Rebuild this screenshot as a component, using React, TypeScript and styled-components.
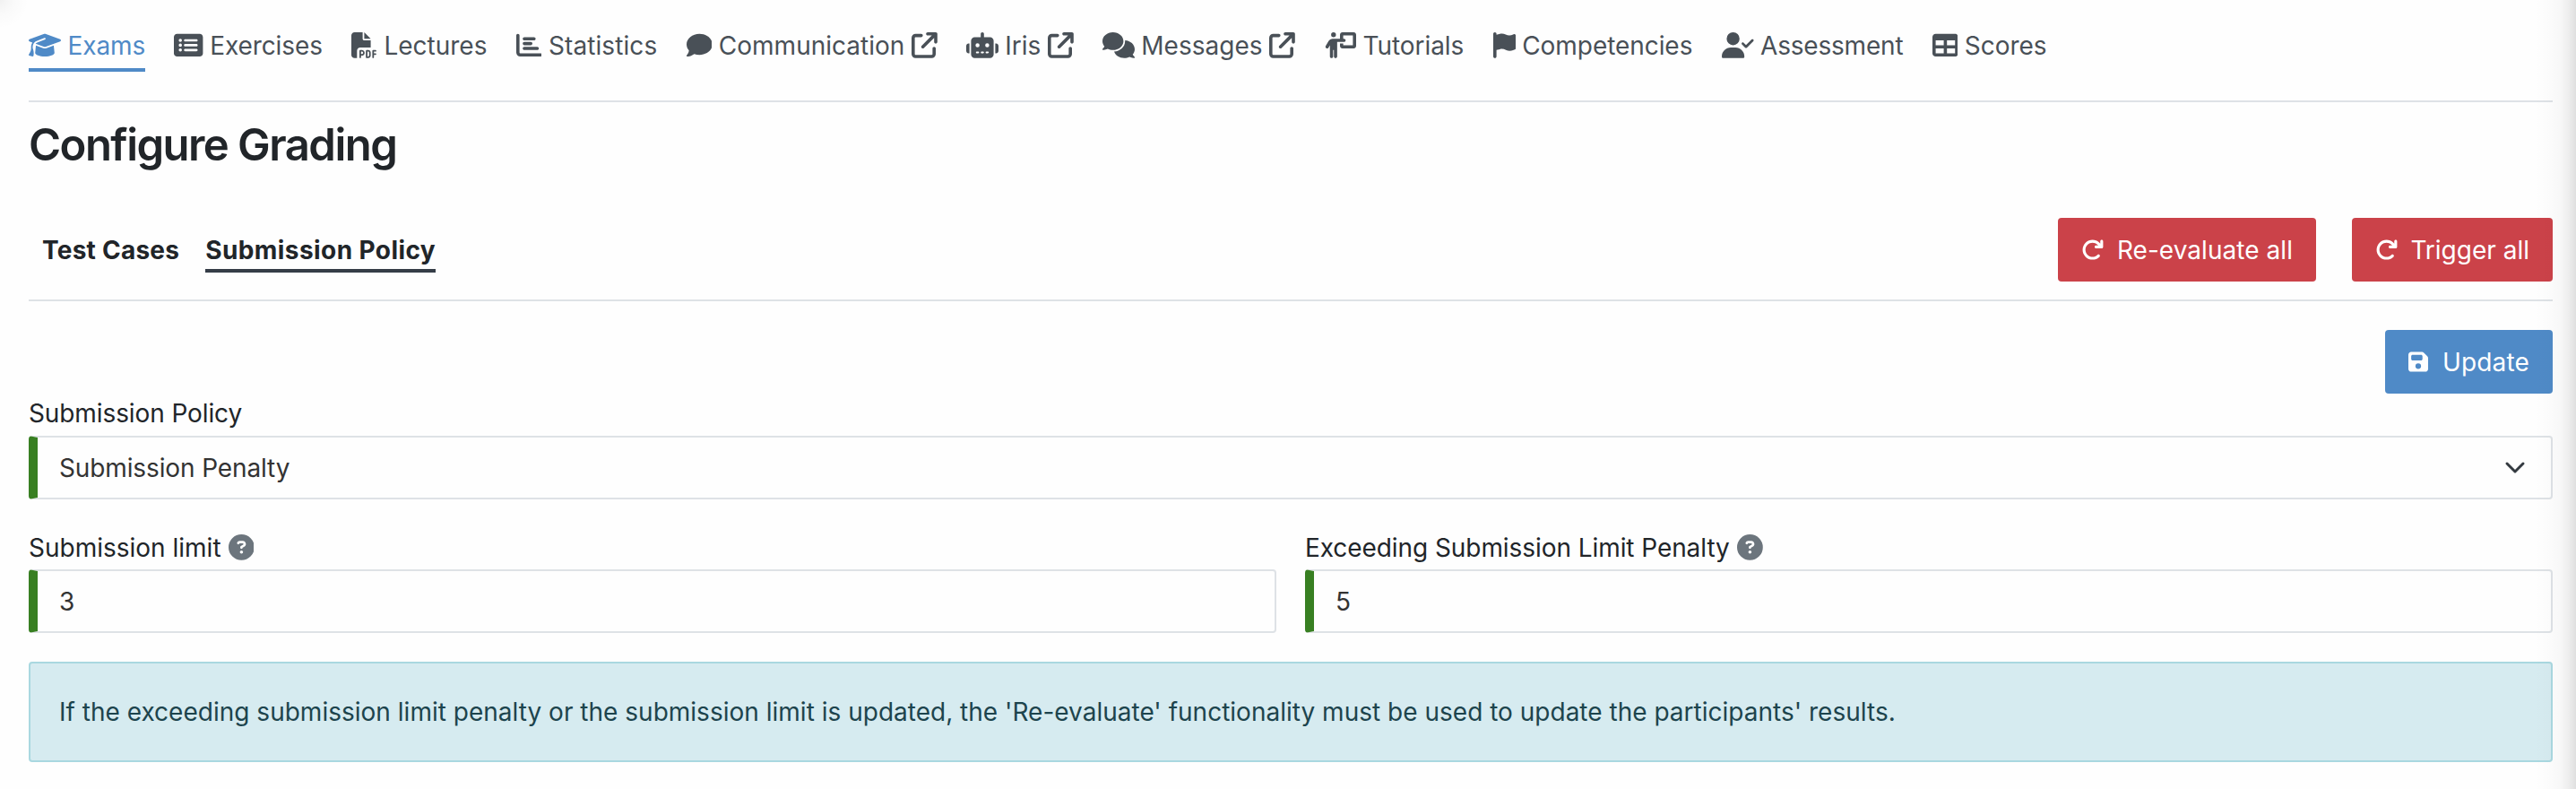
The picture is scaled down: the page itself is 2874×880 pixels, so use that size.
import React from 'react';
import styled, { createGlobalStyle, css } from 'styled-components';
import {
  FaArrowRotateRight,
  FaArrowUpRightFromSquare,
  FaChartBar,
  FaCircleQuestion,
  FaComment,
  FaComments,
  FaFilePdf,
  FaFlag,
  FaFloppyDisk,
  FaGraduationCap,
  FaPersonChalkboard,
  FaRectangleList,
  FaRobot,
  FaTable,
  FaUserCheck,
} from 'react-icons/fa6';
import type { IconType } from 'react-icons';

const GlobalStyle = createGlobalStyle`
  *, *::before, *::after { box-sizing: border-box; }
  body {
    margin: 0;
    background: #fefefe;
    color: #212529;
    font-family: Inter, "Liberation Sans", sans-serif;
    font-size: 28px;
    line-height: 42px;
  }
`;

const Page = styled.div`
  position: relative;
  height: 880px;
  padding: 0 26px 0 32px;
  overflow: hidden;
`;

const EdgeShade = styled.div`
  position: absolute;
  inset: 0;
  pointer-events: none;
  background:
    linear-gradient(to left, rgba(0, 0, 0, 0.12) 0, rgba(0, 0, 0, 0.063) 9px, rgba(0, 0, 0, 0.025) 19px, rgba(0, 0, 0, 0.01) 29px, transparent 46px),
    radial-gradient(circle at 0 0, rgba(0, 0, 0, 0.05) 0, rgba(0, 0, 0, 0.015) 16px, transparent 32px);
`;

const Nav = styled.nav`
  display: flex;
  align-items: flex-start;
  gap: 32.2px;
  height: 114px;
  padding-top: 25px;
  border-bottom: 2px solid #dee2e6;
`;

const NavItem = styled.a<{ $active?: boolean }>`
  display: flex;
  align-items: center;
  gap: 7.5px;
  height: 55px;
  border-bottom: 4px solid ${(p) => (p.$active ? '#4f8ac7' : 'transparent')};
  color: ${(p) => (p.$active ? '#4f8ac7' : '#495057')};
`;

/* Glyphs share one height; the width follows each glyph's own proportions. */
const IconBox = styled.span<{ $width?: number }>`
  display: flex;
  flex: none;
  width: ${(p) => p.$width ?? 28.8}px;
  height: 28.8px;

  svg {
    width: 100%;
    height: 100%;
  }
`;

const Label = styled.span<{ $tracking?: number }>`
  white-space: nowrap;
  letter-spacing: ${(p) => p.$tracking ?? 0}px;
`;

const Title = styled.h1`
  margin: 16px 0 0;
  height: 64px;
  font-size: 49px;
  font-weight: 600;
  line-height: 64px;
  letter-spacing: -1.53px;
`;

const TabBar = styled.div`
  display: flex;
  align-items: center;
  height: 142px;
  padding-top: 29px;
  padding-left: 15px;
  border-bottom: 2px solid #dee2e6;
`;

const Tab = styled.a<{ $active?: boolean }>`
  height: 46px;
  margin-top: 5px;
  margin-right: 29px;
  border-bottom: 4px solid ${(p) => (p.$active ? '#353d47' : 'transparent')};
  font-weight: 700;
  white-space: nowrap;
  letter-spacing: ${(p) => (p.$active ? 0.42 : 0.24)}px;
`;

const Actions = styled.div`
  display: flex;
  gap: 40px;
  margin-left: auto;
`;

const Button = styled.button<{ $tone: 'danger' | 'primary'; $width: number }>`
  display: flex;
  align-items: center;
  justify-content: space-between;
  width: ${(p) => p.$width}px;
  height: 71px;
  padding: 0 26px;
  border: 0;
  border-radius: 4px;
  background: ${(p) => (p.$tone === 'danger' ? '#cb4249' : '#4f8ac7')};
  color: #fff;
  font: inherit;

  svg {
    width: ${(p) => (p.$tone === 'danger' ? 25.2 : 22)}px;
    height: 25.2px;
  }
`;

const UpdateRow = styled.div`
  display: flex;
  justify-content: flex-end;
  padding-top: 32px;
`;

const Field = styled.div`
  flex: 1 1 0;
  min-width: 0;
`;

const FieldLabel = styled.label<{ $hint?: boolean }>`
  display: flex;
  align-items: center;
  gap: 8px;
  height: 42px;
  padding-top: ${(p) => (p.$hint ? 1 : 0)}px;

  svg {
    width: 28.8px;
    height: 28.8px;
    color: #6c757d;
  }
`;

const controlStyle = css`
  display: flex;
  align-items: center;
  justify-content: space-between;
  width: 100%;
  height: 71px;
  margin-top: 4px;
  padding: 0 28px 0 24px;
  border: 2px solid #dee2e6;
  border-left: 10px solid #387f22;
  border-radius: 4px;
  background: transparent;
  color: #333;
`;

const SelectBox = styled.div`
  ${controlStyle}
`;

const NumberInput = styled.input`
  ${controlStyle}
  font: inherit;
`;

const FieldRow = styled.div`
  display: flex;
  gap: 32px;
  margin-top: 32px;
`;

const Notice = styled.div`
  display: flex;
  align-items: center;
  height: 112px;
  margin-top: 32px;
  padding-left: 32px;
  border: 2px solid #a9d8e0;
  border-radius: 4px;
  background: #d6ebf0;
  color: #1d444d;
`;

const PolicySection = styled.div`
  padding-top: 1px;
`;

type NavEntry = {
  label: string;
  icon: IconType;
  iconWidth?: number;
  tracking?: number;
  active?: boolean;
  external?: boolean;
};

const entries: NavEntry[] = [
  { label: 'Exams', icon: FaGraduationCap, iconWidth: 36, tracking: -0.1, active: true },
  { label: 'Exercises', icon: FaRectangleList, iconWidth: 32.4, tracking: -0.1 },
  { label: 'Lectures', icon: FaFilePdf },
  { label: 'Statistics', icon: FaChartBar, tracking: 0.1 },
  { label: 'Communication', icon: FaComment, external: true },
  { label: 'Iris', icon: FaRobot, iconWidth: 36, external: true },
  { label: 'Messages', icon: FaComments, iconWidth: 36, external: true },
  { label: 'Tutorials', icon: FaPersonChalkboard, iconWidth: 36, tracking: -0.05 },
  { label: 'Competencies', icon: FaFlag, iconWidth: 25.2, tracking: -0.06 },
  { label: 'Assessment', icon: FaUserCheck, iconWidth: 36, tracking: -0.2 },
  { label: 'Scores', icon: FaTable, tracking: -0.05 },
];

const Chevron = () => (
  <svg width="24" height="16" viewBox="0 0 24 16" fill="none" stroke="#343a40" strokeWidth="3" strokeLinecap="round" strokeLinejoin="round">
    <path d="M3 3l9 9 9-9" />
  </svg>
);

export default function App() {
  return (
    <>
      <GlobalStyle />
      <Page>
        <Nav>
          {entries.map(({ label, icon: Icon, iconWidth, tracking, active, external }) => (
            <NavItem key={label} $active={active}>
              <IconBox $width={iconWidth}>
                <Icon />
              </IconBox>
              <Label $tracking={tracking}>{label}</Label>
              {external && (
                <IconBox>
                  <FaArrowUpRightFromSquare />
                </IconBox>
              )}
            </NavItem>
          ))}
        </Nav>
        <Title>Configure Grading</Title>
        <TabBar>
          <Tab>Test Cases</Tab>
          <Tab $active>Submission Policy</Tab>
          <Actions>
            <Button $tone="danger" $width={288}>
              <FaArrowRotateRight />
              <Label $tracking={0.05}>Re-evaluate all</Label>
            </Button>
            <Button $tone="danger" $width={224}>
              <FaArrowRotateRight />
              <Label>Trigger all</Label>
            </Button>
          </Actions>
        </TabBar>
        <UpdateRow>
          <Button $tone="primary" $width={187}>
            <FaFloppyDisk />
            <Label $tracking={0.15}>Update</Label>
          </Button>
        </UpdateRow>
        <PolicySection>
          <Field>
            <FieldLabel>
              <Label $tracking={-0.1}>Submission Policy</Label>
            </FieldLabel>
            <SelectBox>
              <Label $tracking={-0.12}>Submission Penalty</Label>
              <Chevron />
            </SelectBox>
          </Field>
        </PolicySection>
        <FieldRow>
          <Field>
            <FieldLabel $hint>
              <Label>Submission limit</Label>
              <FaCircleQuestion />
            </FieldLabel>
            <NumberInput defaultValue="3" />
          </Field>
          <Field>
            <FieldLabel $hint>
              <Label $tracking={-0.07}>Exceeding Submission Limit Penalty</Label>
              <FaCircleQuestion />
            </FieldLabel>
            <NumberInput defaultValue="5" />
          </Field>
        </FieldRow>
        <Notice>
          <Label $tracking={0.01}>
            If the exceeding submission limit penalty or the submission limit is updated, the 'Re-evaluate' functionality must be used to update the participants' results.
          </Label>
        </Notice>
        <EdgeShade />
      </Page>
    </>
  );
}
